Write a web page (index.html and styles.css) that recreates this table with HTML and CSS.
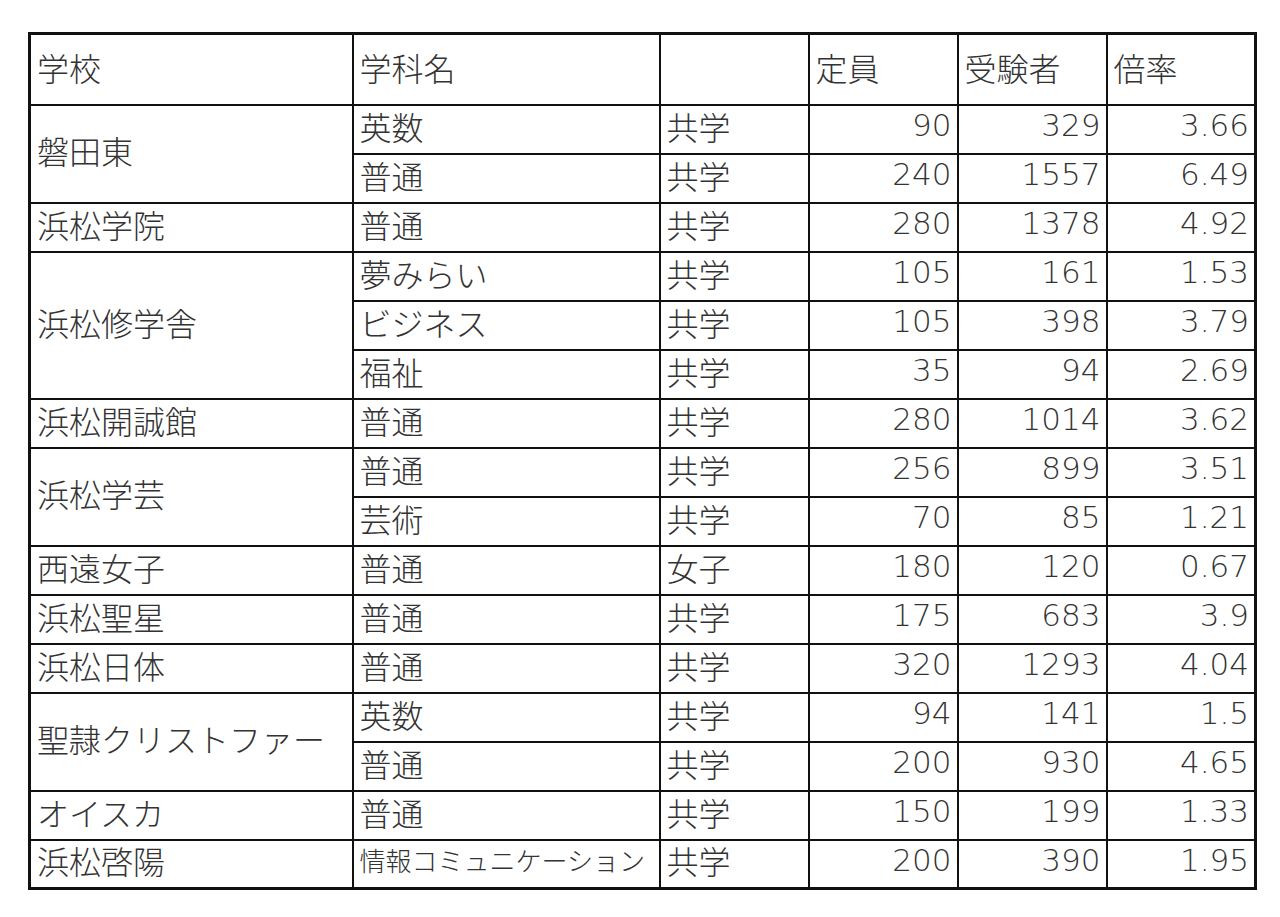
FILE: index.html
```html
<!DOCTYPE html>
<html lang="ja">
<head>
<meta charset="utf-8">
<link rel="stylesheet" href="styles.css">
</head>
<body>
<div class="page">
<table class="grid">
  <colgroup>
    <col class="c-school"><col class="c-dept"><col class="c-type"><col class="c-num"><col class="c-num"><col class="c-num">
  </colgroup>
  <thead>
    <tr class="head"><th>学校</th><th>学科名</th><th></th><th>定員</th><th>受験者</th><th>倍率</th></tr>
  </thead>
  <tbody>
    <tr><td rowspan="2">磐田東</td><td>英数</td><td>共学</td><td class="n">90</td><td class="n">329</td><td class="n">3.66</td></tr>
    <tr><td>普通</td><td>共学</td><td class="n">240</td><td class="n">1557</td><td class="n">6.49</td></tr>
    <tr><td>浜松学院</td><td>普通</td><td>共学</td><td class="n">280</td><td class="n">1378</td><td class="n">4.92</td></tr>
    <tr><td rowspan="3">浜松修学舎</td><td>夢みらい</td><td>共学</td><td class="n">105</td><td class="n">161</td><td class="n">1.53</td></tr>
    <tr><td>ビジネス</td><td>共学</td><td class="n">105</td><td class="n">398</td><td class="n">3.79</td></tr>
    <tr><td>福祉</td><td>共学</td><td class="n">35</td><td class="n">94</td><td class="n">2.69</td></tr>
    <tr><td>浜松開誠館</td><td>普通</td><td>共学</td><td class="n">280</td><td class="n">1014</td><td class="n">3.62</td></tr>
    <tr><td rowspan="2">浜松学芸</td><td>普通</td><td>共学</td><td class="n">256</td><td class="n">899</td><td class="n">3.51</td></tr>
    <tr><td>芸術</td><td>共学</td><td class="n">70</td><td class="n">85</td><td class="n">1.21</td></tr>
    <tr><td>西遠女子</td><td>普通</td><td>女子</td><td class="n">180</td><td class="n">120</td><td class="n">0.67</td></tr>
    <tr><td>浜松聖星</td><td>普通</td><td>共学</td><td class="n">175</td><td class="n">683</td><td class="n">3.9</td></tr>
    <tr><td>浜松日体</td><td>普通</td><td>共学</td><td class="n">320</td><td class="n">1293</td><td class="n">4.04</td></tr>
    <tr><td rowspan="2">聖隷クリストファー</td><td>英数</td><td>共学</td><td class="n">94</td><td class="n">141</td><td class="n">1.5</td></tr>
    <tr><td>普通</td><td>共学</td><td class="n">200</td><td class="n">930</td><td class="n">4.65</td></tr>
    <tr><td>オイスカ</td><td>普通</td><td>共学</td><td class="n">150</td><td class="n">199</td><td class="n">1.33</td></tr>
    <tr><td>浜松啓陽</td><td class="small">情報コミュニケーション</td><td>共学</td><td class="n">200</td><td class="n">390</td><td class="n">1.95</td></tr>
  </tbody>
</table>
</div>
</body>
</html>
```

FILE: styles.css
```css
html, body {
  margin: 0;
  padding: 0;
  background: #ffffff;
}
.page {
  padding: 32px 0 0 28px;
}
.grid {
  border-collapse: collapse;
  table-layout: fixed;
  width: 1228px;
  border: 3px solid #111;
  font-family: "Noto Sans CJK JP", "Noto Sans", sans-serif;
  font-weight: 300;
  font-size: 32px;
  color: #333;
}
.c-school { width: 323px; }
.c-dept { width: 307px; }
.c-type { width: 149px; }
.c-num { width: 149px; }
.grid th, .grid td {
  border: 2px solid #111;
  padding: 0 6px 7px 6px;
  text-align: left;
  vertical-align: middle;
  font-weight: 300;
  line-height: 1;
  white-space: nowrap;
}
.grid th {
  padding-bottom: 5px;
}
.head { height: 71px; }
.grid tbody tr { height: 49px; }
.grid td.n {
  text-align: right;
  padding-right: 5px;
  font-family: "DejaVu Sans", sans-serif;
  font-weight: 200;
  font-size: 31px;
}
.grid td.small {
  font-size: 26px;
  padding-left: 6px;
  letter-spacing: 0;
}
```
